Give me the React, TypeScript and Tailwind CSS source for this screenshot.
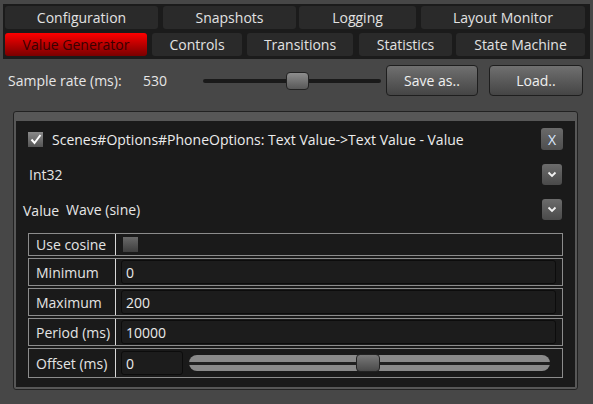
import React from "react";

const topTabs = [
  { label: "Configuration", w: "w-[153px]" },
  { label: "Snapshots", w: "w-[133px] ml-[5px]" },
  { label: "Logging", w: "w-[117px] ml-[3px]" },
  { label: "Layout Monitor", w: "w-[164px] ml-[5px]" },
];

const bottomTabs = [
  { label: "Value Generator", w: "w-[142px]", active: true },
  { label: "Controls", w: "w-[90px] ml-[5px]" },
  { label: "Transitions", w: "w-[106px] ml-[5px]" },
  { label: "Statistics", w: "w-[93px] ml-[6px]" },
  { label: "State Machine", w: "w-[129px] ml-[4px]" },
];

function Tab({ label, w, active }: { label: string; w: string; active?: boolean }) {
  return (
    <div
      className={
        "flex h-[23px] items-center justify-center rounded-[3px] " +
        w +
        (active
          ? " bg-gradient-to-b from-[#ff0000] to-[#7a0000] text-[#3a0000]"
          : " bg-[#2a2a2a] text-[#e2e2e2]")
      }
    >
      {label}
    </div>
  );
}

function Chevron() {
  return (
    <div className="flex h-[21px] w-[20px] items-center justify-center rounded-[3px] bg-gradient-to-b from-[#6c6c6c] to-[#4a4a4a]">
      <svg width="10" height="7" viewBox="0 0 10 7">
        <path d="M1.5 1.5 L5 5 L8.5 1.5" fill="none" stroke="#f2f2f2" strokeWidth="1.8" />
      </svg>
    </div>
  );
}

function PropRow({ label, h, children }: { label: string; h: string; children: React.ReactNode }) {
  return (
    <div className={"flex border border-[#8c8c8c] " + h}>
      <div className="flex w-[87px] items-center border-r border-[#d8d8d8] pl-[7px] text-[#e4e4e4]">{label}</div>
      <div className="flex flex-1 items-center pl-[5px] pr-[6px]">{children}</div>
    </div>
  );
}

function InputBox({ value, w }: { value: string; w?: string }) {
  return (
    <div
      className={
        "flex h-[24px] items-center rounded-[3px] border border-[#0c0c0c] bg-[#1c1c1c] pl-[4px] text-[#eaeaea] " +
        (w ?? "flex-1")
      }
    >
      {value}
    </div>
  );
}

export default function App() {
  return (
    <div className="flex h-[404px] w-[593px] flex-col bg-[#474747] font-['Open_Sans',sans-serif] text-[14px] text-[#e6e6e6]">
      <div className="mx-[3px] mt-[4px] flex flex-col gap-[4px] bg-[#1b1b1b] px-[2px] pb-[3px] pt-[2px]">
        <div className="flex">
          {topTabs.map((t) => (
            <Tab key={t.label} label={t.label} w={t.w} />
          ))}
        </div>
        <div className="flex">
          {bottomTabs.map((t) => (
            <Tab key={t.label} label={t.label} w={t.w} active={t.active} />
          ))}
        </div>
      </div>

      <div className="mt-[6px] flex h-[31px] items-center pl-[8px]">
        <span className="w-[135px]">Sample rate (ms):</span>
        <span className="w-[60px]">530</span>
        <div className="relative flex h-[18px] w-[178px] items-center">
          <div className="h-[4px] w-full rounded-full bg-[#1a1a1a]" />
          <div className="absolute left-[83px] top-0 h-[18px] w-[23px] rounded-[4px] border border-[#222] bg-gradient-to-b from-[#8e8e8e] to-[#585858]" />
        </div>
        <button className="ml-[5px] h-[31px] w-[92px] rounded-[4px] border border-[#1e1e1e] bg-gradient-to-b from-[#707070] to-[#454545] text-[#f0f0f0]">
          Save as..
        </button>
        <button className="ml-[11px] h-[31px] w-[94px] rounded-[4px] border border-[#1e1e1e] bg-gradient-to-b from-[#707070] to-[#454545] text-[#f0f0f0]">
          Load..
        </button>
      </div>

      <div className="ml-[13px] mt-[15px] flex h-[279px] w-[565px] flex-col rounded-[3px] border border-[#222] bg-[#575757] px-[2px] pb-[2px] pt-[9px]">
        <div className="flex flex-1 flex-col bg-[#1a1a1a] px-[12px]">
          <div className="mt-[7px] flex h-[22px] items-center">
            <div className="flex h-[15px] w-[15px] items-center justify-center bg-gradient-to-b from-[#8a8a8a] to-[#555]">
              <svg width="12" height="11" viewBox="0 0 12 11">
                <path d="M1.5 5.5 L4.5 9 L10.5 1" fill="none" stroke="#ffffff" strokeWidth="2" />
              </svg>
            </div>
            <span className="ml-[9px] flex-1 text-[#ececec]">
              Scenes#Options#PhoneOptions: Text Value-&gt;Text Value - Value
            </span>
            <div className="flex h-[22px] w-[22px] items-center justify-center rounded-[3px] bg-gradient-to-b from-[#6a6a6a] to-[#4e4e4e] text-[#dbe8ff]">
              X
            </div>
          </div>
          <div className="mt-[14px] flex h-[21px] items-center pr-[1px]">
            <span className="ml-[1px] flex-1">Int32</span>
            <Chevron />
          </div>
          <div className="mt-[14px] flex h-[21px] items-center pr-[1px]">
            <span className="-ml-[5px] mt-[2px]">Value</span>
            <span className="ml-[7px] flex-1">Wave (sine)</span>
            <Chevron />
          </div>

          <div className="mt-[13px] flex flex-col gap-[2px]">
            <PropRow label="Use cosine" h="h-[23px]">
              <div className="ml-[2px] h-[15px] w-[15px] bg-gradient-to-b from-[#6a6a6a] to-[#3e3e3e]" />
            </PropRow>
            <PropRow label="Minimum" h="h-[28px]">
              <InputBox value="0" />
            </PropRow>
            <PropRow label="Maximum" h="h-[28px]">
              <InputBox value="200" />
            </PropRow>
            <PropRow label="Period (ms)" h="h-[28px]">
              <InputBox value="10000" />
            </PropRow>
            <PropRow label="Offset (ms)" h="h-[30px]">
              <InputBox value="0" w="w-[62px]" />
              <div className="relative ml-[6px] mr-[6px] flex h-[16px] flex-1 items-center rounded-full bg-[#8a8a8a]">
                <div className="h-[3px] w-full bg-[#202020]" />
                <div className="absolute left-[167px] top-[-1px] h-[18px] w-[24px] rounded-[4px] border border-[#222] bg-gradient-to-b from-[#7a7a7a] to-[#4a4a4a]" />
              </div>
            </PropRow>
          </div>
        </div>
      </div>
    </div>
  );
}
